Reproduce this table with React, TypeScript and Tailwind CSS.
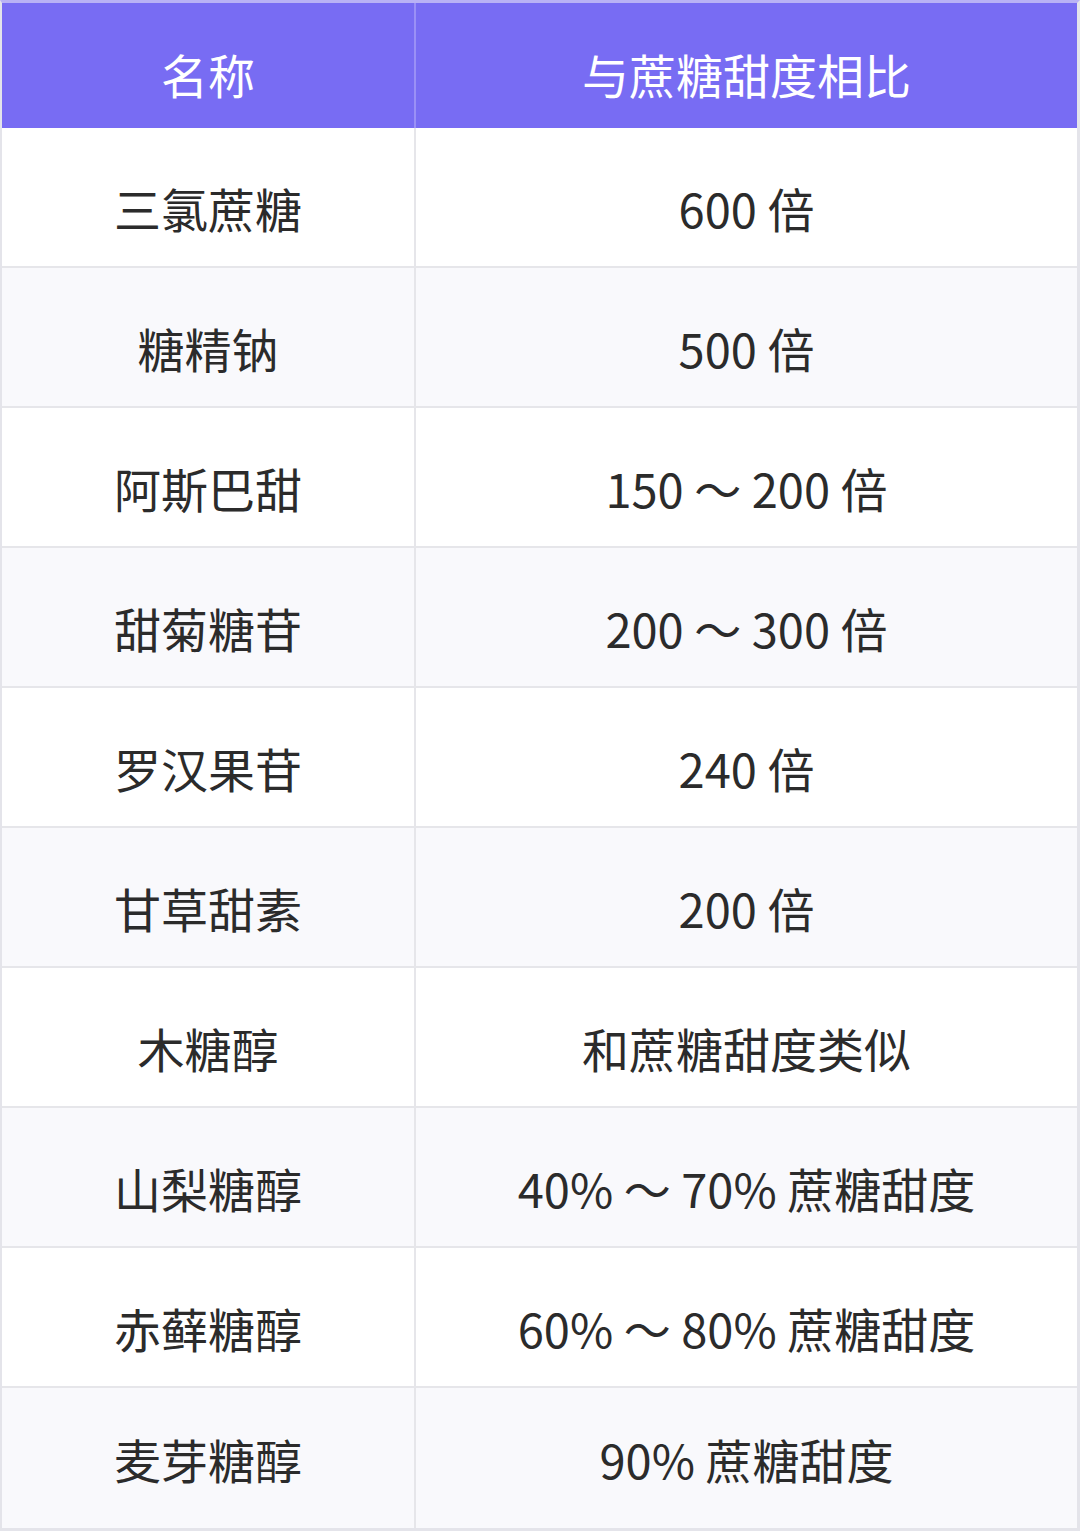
import React from "react";

const rows: [string, string][] = [
  ["三氯蔗糖", "600 倍"],
  ["糖精钠", "500 倍"],
  ["阿斯巴甜", "150 ～ 200 倍"],
  ["甜菊糖苷", "200 ～ 300 倍"],
  ["罗汉果苷", "240 倍"],
  ["甘草甜素", "200 倍"],
  ["木糖醇", "和蔗糖甜度类似"],
  ["山梨糖醇", "40% ～ 70% 蔗糖甜度"],
  ["赤藓糖醇", "60% ～ 80% 蔗糖甜度"],
  ["麦芽糖醇", "90% 蔗糖甜度"],
];

export default function App() {
  return (
    <div
      className="w-[1080px] h-[1531px] bg-white border-l-2 border-r-[3px] border-b-[3px] border-t-[3px] border-[#e4e4ea] border-t-[#b9b2f5] flex flex-col"
      style={{ fontFamily: '"Noto Sans CJK SC", "Noto Sans", sans-serif' }}
    >
      <div className="grid grid-cols-[414px_1fr] h-[125px] bg-[#786cf3] text-white text-[47px] shrink-0">
        <div className="flex items-center justify-center border-r-2 border-[#9a90f6] pt-[18px]">名称</div>
        <div className="flex items-center justify-center pt-[18px]">与蔗糖甜度相比</div>
      </div>
      {rows.map(([name, value], i) => {
        const last = i === rows.length - 1;
        return (
          <div
            key={name}
            className={
              "grid grid-cols-[414px_1fr] shrink-0 text-[47px] text-[#2b2b2b] " +
              (i % 2 === 1 ? "bg-[#f9f9fc] " : "bg-white ") +
              (last ? "flex-1" : "h-[140px] border-b-2 border-[#e6e6ea]")
            }
          >
            <div className={"flex items-center justify-center border-r-2 border-[#e6e6ea] " + (last ? "pt-[2px]" : "pt-[22px]")}>{name}</div>
            <div className={"flex items-center justify-center " + (last ? "pt-[2px]" : "pt-[22px]")}>{value}</div>
          </div>
        );
      })}
    </div>
  );
}
